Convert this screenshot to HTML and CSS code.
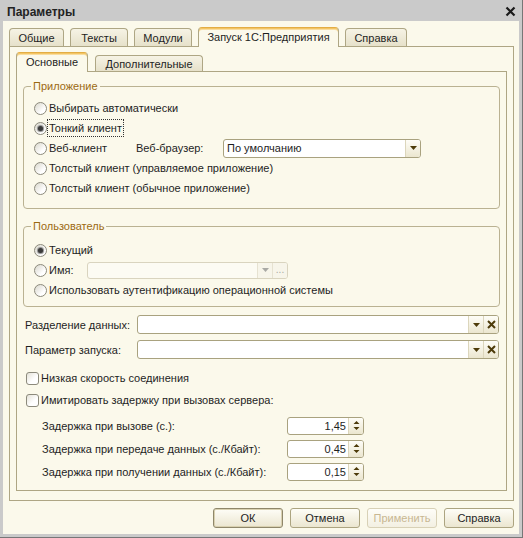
FILE: index.html
```html
<!DOCTYPE html>
<html lang="ru">
<head>
<meta charset="utf-8">
<title>Параметры</title>
<link rel="stylesheet" href="styles.css">
</head>
<body>
<div class="win">
  <div class="titlebar">
    <span class="title">Параметры</span>
    <svg class="close" width="11" height="11" viewBox="0 0 11 11"><path d="M1.5 1.5 L9.5 9.5 M9.5 1.5 L1.5 9.5" stroke="#1a1a1a" stroke-width="2.2" fill="none"/></svg>
  </div>
  <div class="client">
    <div class="tabs outer-tabs">
      <div class="tab w-gen">Общие</div>
      <div class="tab w-txt">Тексты</div>
      <div class="tab w-mod">Модули</div>
      <div class="tab active w-run">Запуск 1С:Предприятия</div>
      <div class="tab w-help">Справка</div>
    </div>
    <div class="panel outer-panel">
      <div class="tabs inner-tabs">
        <div class="tab active w-main">Основные</div>
        <div class="tab small w-extra">Дополнительные</div>
      </div>
      <div class="panel inner-panel">
        <fieldset class="group g-app">
          <legend>Приложение</legend>
          <div class="opt-row"><span class="radio"></span><span>Выбирать автоматически</span></div>
          <div class="opt-row"><span class="radio checked"></span><span class="focus">Тонкий клиент</span></div>
          <div class="opt-row">
            <span class="radio"></span><span class="lbl-web">Веб-клиент</span><span class="lbl-browser">Веб-браузер:</span>
            <div class="combo browser"><span class="ctext">По умолчанию</span><span class="cbtn"><svg width="7" height="4" viewBox="0 0 7 4"><path d="M0 0 H7 L3.5 4 Z" fill="#4d3b0a"/></svg></span></div>
          </div>
          <div class="opt-row"><span class="radio"></span><span>Толстый клиент (управляемое приложение)</span></div>
          <div class="opt-row"><span class="radio"></span><span>Толстый клиент (обычное приложение)</span></div>
        </fieldset>
        <fieldset class="group g-user">
          <legend>Пользователь</legend>
          <div class="opt-row"><span class="radio checked"></span><span>Текущий</span></div>
          <div class="opt-row">
            <span class="radio"></span><span class="lbl-name">Имя:</span>
            <div class="combo name disabled"><span class="ctext"></span><span class="cbtn"><svg width="7" height="4" viewBox="0 0 7 4"><path d="M0 0 H7 L3.5 4 Z" fill="#a9a9a4"/></svg></span><span class="cbtn dots">...</span></div>
          </div>
          <div class="opt-row"><span class="radio"></span><span>Использовать аутентификацию операционной системы</span></div>
        </fieldset>
        <div class="field-row first">
          <span class="flabel">Разделение данных:</span>
          <div class="combo wide"><span class="ctext"></span><span class="cbtn"><svg width="7" height="4" viewBox="0 0 7 4"><path d="M0 0 H7 L3.5 4 Z" fill="#4d3b0a"/></svg></span><span class="cbtn"><svg width="9" height="9" viewBox="0 0 9 9"><path d="M1 1 L8 8 M8 1 L1 8" stroke="#4d3b0a" stroke-width="2" fill="none"/></svg></span></div>
        </div>
        <div class="field-row">
          <span class="flabel">Параметр запуска:</span>
          <div class="combo wide"><span class="ctext"></span><span class="cbtn"><svg width="7" height="4" viewBox="0 0 7 4"><path d="M0 0 H7 L3.5 4 Z" fill="#4d3b0a"/></svg></span><span class="cbtn"><svg width="9" height="9" viewBox="0 0 9 9"><path d="M1 1 L8 8 M8 1 L1 8" stroke="#4d3b0a" stroke-width="2" fill="none"/></svg></span></div>
        </div>
        <div class="check-row first"><span class="check"></span><span>Низкая скорость соединения</span></div>
        <div class="check-row"><span class="check"></span><span>Имитировать задержку при вызовах сервера:</span></div>
        <div class="spin-row first">
          <span class="slabel">Задержка при вызове (с.):</span>
          <div class="spin"><span class="sval">1,45</span><span class="sbtn"><svg width="7" height="11" viewBox="0 0 7 11"><path d="M3.5 1 L6.5 4 H0.5 Z M0.5 7 H6.5 L3.5 10 Z" fill="#4d3b0a"/></svg></span></div>
        </div>
        <div class="spin-row">
          <span class="slabel">Задержка при передаче данных (с./Кбайт):</span>
          <div class="spin"><span class="sval">0,45</span><span class="sbtn"><svg width="7" height="11" viewBox="0 0 7 11"><path d="M3.5 1 L6.5 4 H0.5 Z M0.5 7 H6.5 L3.5 10 Z" fill="#4d3b0a"/></svg></span></div>
        </div>
        <div class="spin-row">
          <span class="slabel">Задержка при получении данных (с./Кбайт):</span>
          <div class="spin"><span class="sval">0,15</span><span class="sbtn"><svg width="7" height="11" viewBox="0 0 7 11"><path d="M3.5 1 L6.5 4 H0.5 Z M0.5 7 H6.5 L3.5 10 Z" fill="#4d3b0a"/></svg></span></div>
        </div>
      </div>
    </div>
    <div class="buttons">
      <div class="pbtn default">ОК</div>
      <div class="pbtn">Отмена</div>
      <div class="pbtn disabled">Применить</div>
      <div class="pbtn">Справка</div>
    </div>
  </div>
</div>
</body>
</html>
```
FILE: styles.css
```css
* { box-sizing: border-box; }
html, body { margin: 0; padding: 0; }
body {
  width: 523px;
  height: 538px;
  overflow: hidden;
  background: #cacaca;
  font-family: "Liberation Sans", Arial, sans-serif;
  font-size: 11px;
  color: #1e1e1e;
}
.win {
  width: 523px;
  height: 538px;
  background: #cacaca;
  border-right: 1px solid #777;
  border-bottom: 1px solid #777;
  display: flex;
  flex-direction: column;
}
.titlebar {
  height: 21px;
  flex: none;
  display: flex;
  align-items: center;
  justify-content: space-between;
  padding: 2px 6px 0 7px;
}
.title { font-weight: bold; font-size: 12px; color: #222; }
.close { display: block; }
.client {
  margin-left: 3px;
  width: 516px;
  height: 513px;
  flex: none;
  background: #fbf9eb;
  padding: 6px 5px 0 6px;
  display: flex;
  flex-direction: column;
}

/* tabs */
.tabs {
  display: flex;
  align-items: flex-end;
  height: 20px;
  margin-bottom: -1px;
  flex: none;
}
.outer-tabs { gap: 6px; }
.inner-tabs { gap: 7px; }
.tab {
  height: 18px;
  margin-bottom: 1px;
  border: 1px solid #aea684;
  border-bottom: none;
  border-radius: 4px 4px 0 0;
  background: linear-gradient(#f6f3e5, #e6e1ca);
  display: flex;
  align-items: center;
  justify-content: center;
  flex: none;
  white-space: nowrap;
}
.tab.small { height: 16px; }
.tab.active {
  height: 20px;
  margin-bottom: 0;
  background: #fbf9eb;
  position: relative;
  z-index: 1;
  border-top-color: #e3ad45;
  box-shadow: inset 0 1px 0 #f3c565, inset 0 2px 0 #f9dd9f;
  padding-bottom: 1px;
}
.w-gen { width: 55px; }
.w-txt { width: 58px; }
.w-mod { width: 58px; }
.w-run { width: 141px; }
.w-help { width: 62px; }
.w-main { width: 72px; }
.w-extra { width: 108px; }

.panel {
  border: 1px solid #aea684;
  background: #fbf9eb;
  flex: none;
}
.outer-panel {
  height: 455px;
  padding: 5px 6px 0 6px;
  display: flex;
  flex-direction: column;
}
.inner-panel {
  height: 420px;
  padding: 7px 6px 0 6px;
}

/* groups */
.group {
  margin: 0;
  min-width: 0;
  border: 1px solid #bab292;
  border-radius: 4px;
  padding: 5px 10px 10px 10px;
}
.group legend {
  padding: 0 2px;
  margin-left: -3px;
  line-height: 14px;
  color: #9c6a12;
}
.g-user { margin-top: 10px; padding-top: 7px; padding-bottom: 6px; }

.opt-row {
  height: 20px;
  display: flex;
  align-items: center;
  gap: 2px;
  white-space: nowrap;
}
.radio {
  width: 13px;
  height: 13px;
  flex: none;
  border-radius: 50%;
  border: 1px solid #8c8a7c;
  background: linear-gradient(135deg, #d9d7cc, #ffffff 70%);
  display: flex;
  align-items: center;
  justify-content: center;
}
.radio.checked::after {
  content: "";
  width: 5px;
  height: 5px;
  border-radius: 50%;
  background: #3a3a3a;
  box-shadow: 0 0 1px 1px #8a8a8a;
}
.focus {
  outline: 1px dotted #333;
  outline-offset: 1px;
  line-height: 14px;
}
.lbl-web { width: 85px; }
.lbl-browser { width: 85px; }
.lbl-name { width: 36px; }

/* combos */
.combo {
  display: flex;
  border: 1px solid #a9a27f;
  border-radius: 3px;
  background: #fff;
  overflow: hidden;
  flex: none;
}
.combo .ctext { flex: 1; padding-left: 3px; line-height: 17px; }
.combo .cbtn {
  width: 15px;
  flex: none;
  border-left: 1px solid #dcd6bc;
  background: linear-gradient(#fefdf7, #ebe6cf);
  display: flex;
  align-items: center;
  justify-content: center;
}
.combo.browser { width: 198px; height: 19px; }
.combo.name { width: 201px; height: 17px; }
.combo.disabled { border-color: #d9d4bf; background: #fcfbf3; }
.combo.disabled .cbtn { background: #f7f5ea; border-left-color: #e6e2d1; }
.combo .dots { color: #a8a8a2; font-size: 10px; line-height: 12px; align-items: flex-end; padding-bottom: 2px; }
.combo.wide { width: 362px; height: 19px; }

.field-row {
  height: 19px;
  margin-top: 6px;
  display: flex;
  align-items: center;
}
.field-row.first { margin-top: 8px; }
.flabel { width: 114px; padding-left: 2px; flex: none; }

.check-row {
  height: 22px;
  display: flex;
  align-items: center;
  gap: 2px;
  padding-left: 3px;
}
.check-row.first { margin-top: 8px; }
.check {
  width: 13px;
  height: 13px;
  flex: none;
  border: 1px solid #8c8a7c;
  border-radius: 3px;
  background: linear-gradient(135deg, #e4e2d8, #ffffff 60%);
}

.spin-row {
  height: 23px;
  display: flex;
  align-items: center;
  padding-left: 19px;
}
.spin-row.first { margin-top: 3px; }
.slabel { width: 245px; flex: none; }
.spin {
  width: 77px;
  height: 18px;
  display: flex;
  border: 1px solid #a9a27f;
  border-radius: 3px;
  background: #fff;
  overflow: hidden;
}
.spin .sval { flex: 1; text-align: right; padding-right: 2px; line-height: 16px; }
.spin .sbtn {
  width: 15px;
  border-left: 1px solid #dcd6bc;
  background: linear-gradient(#fefdf7, #ebe6cf);
  display: flex;
  align-items: center;
  justify-content: center;
}

/* bottom buttons */
.buttons {
  display: flex;
  justify-content: flex-end;
  gap: 7px;
  margin-top: 7px;
  padding-right: 0;
}
.pbtn {
  width: 70px;
  height: 20px;
  border: 1px solid #aca480;
  border-radius: 3px;
  background: linear-gradient(#fefdf7, #ebe6d0);
  display: flex;
  align-items: center;
  justify-content: center;
  color: #1e1e1e;
}
.pbtn.default {
  border-color: #8f876a;
  box-shadow: inset 0 0 0 1px #d9d1b0;
}
.pbtn.disabled {
  color: #c8b792;
  border-color: #d8d1b6;
  background: linear-gradient(#fefdf8, #f3f0e2);
}
```
